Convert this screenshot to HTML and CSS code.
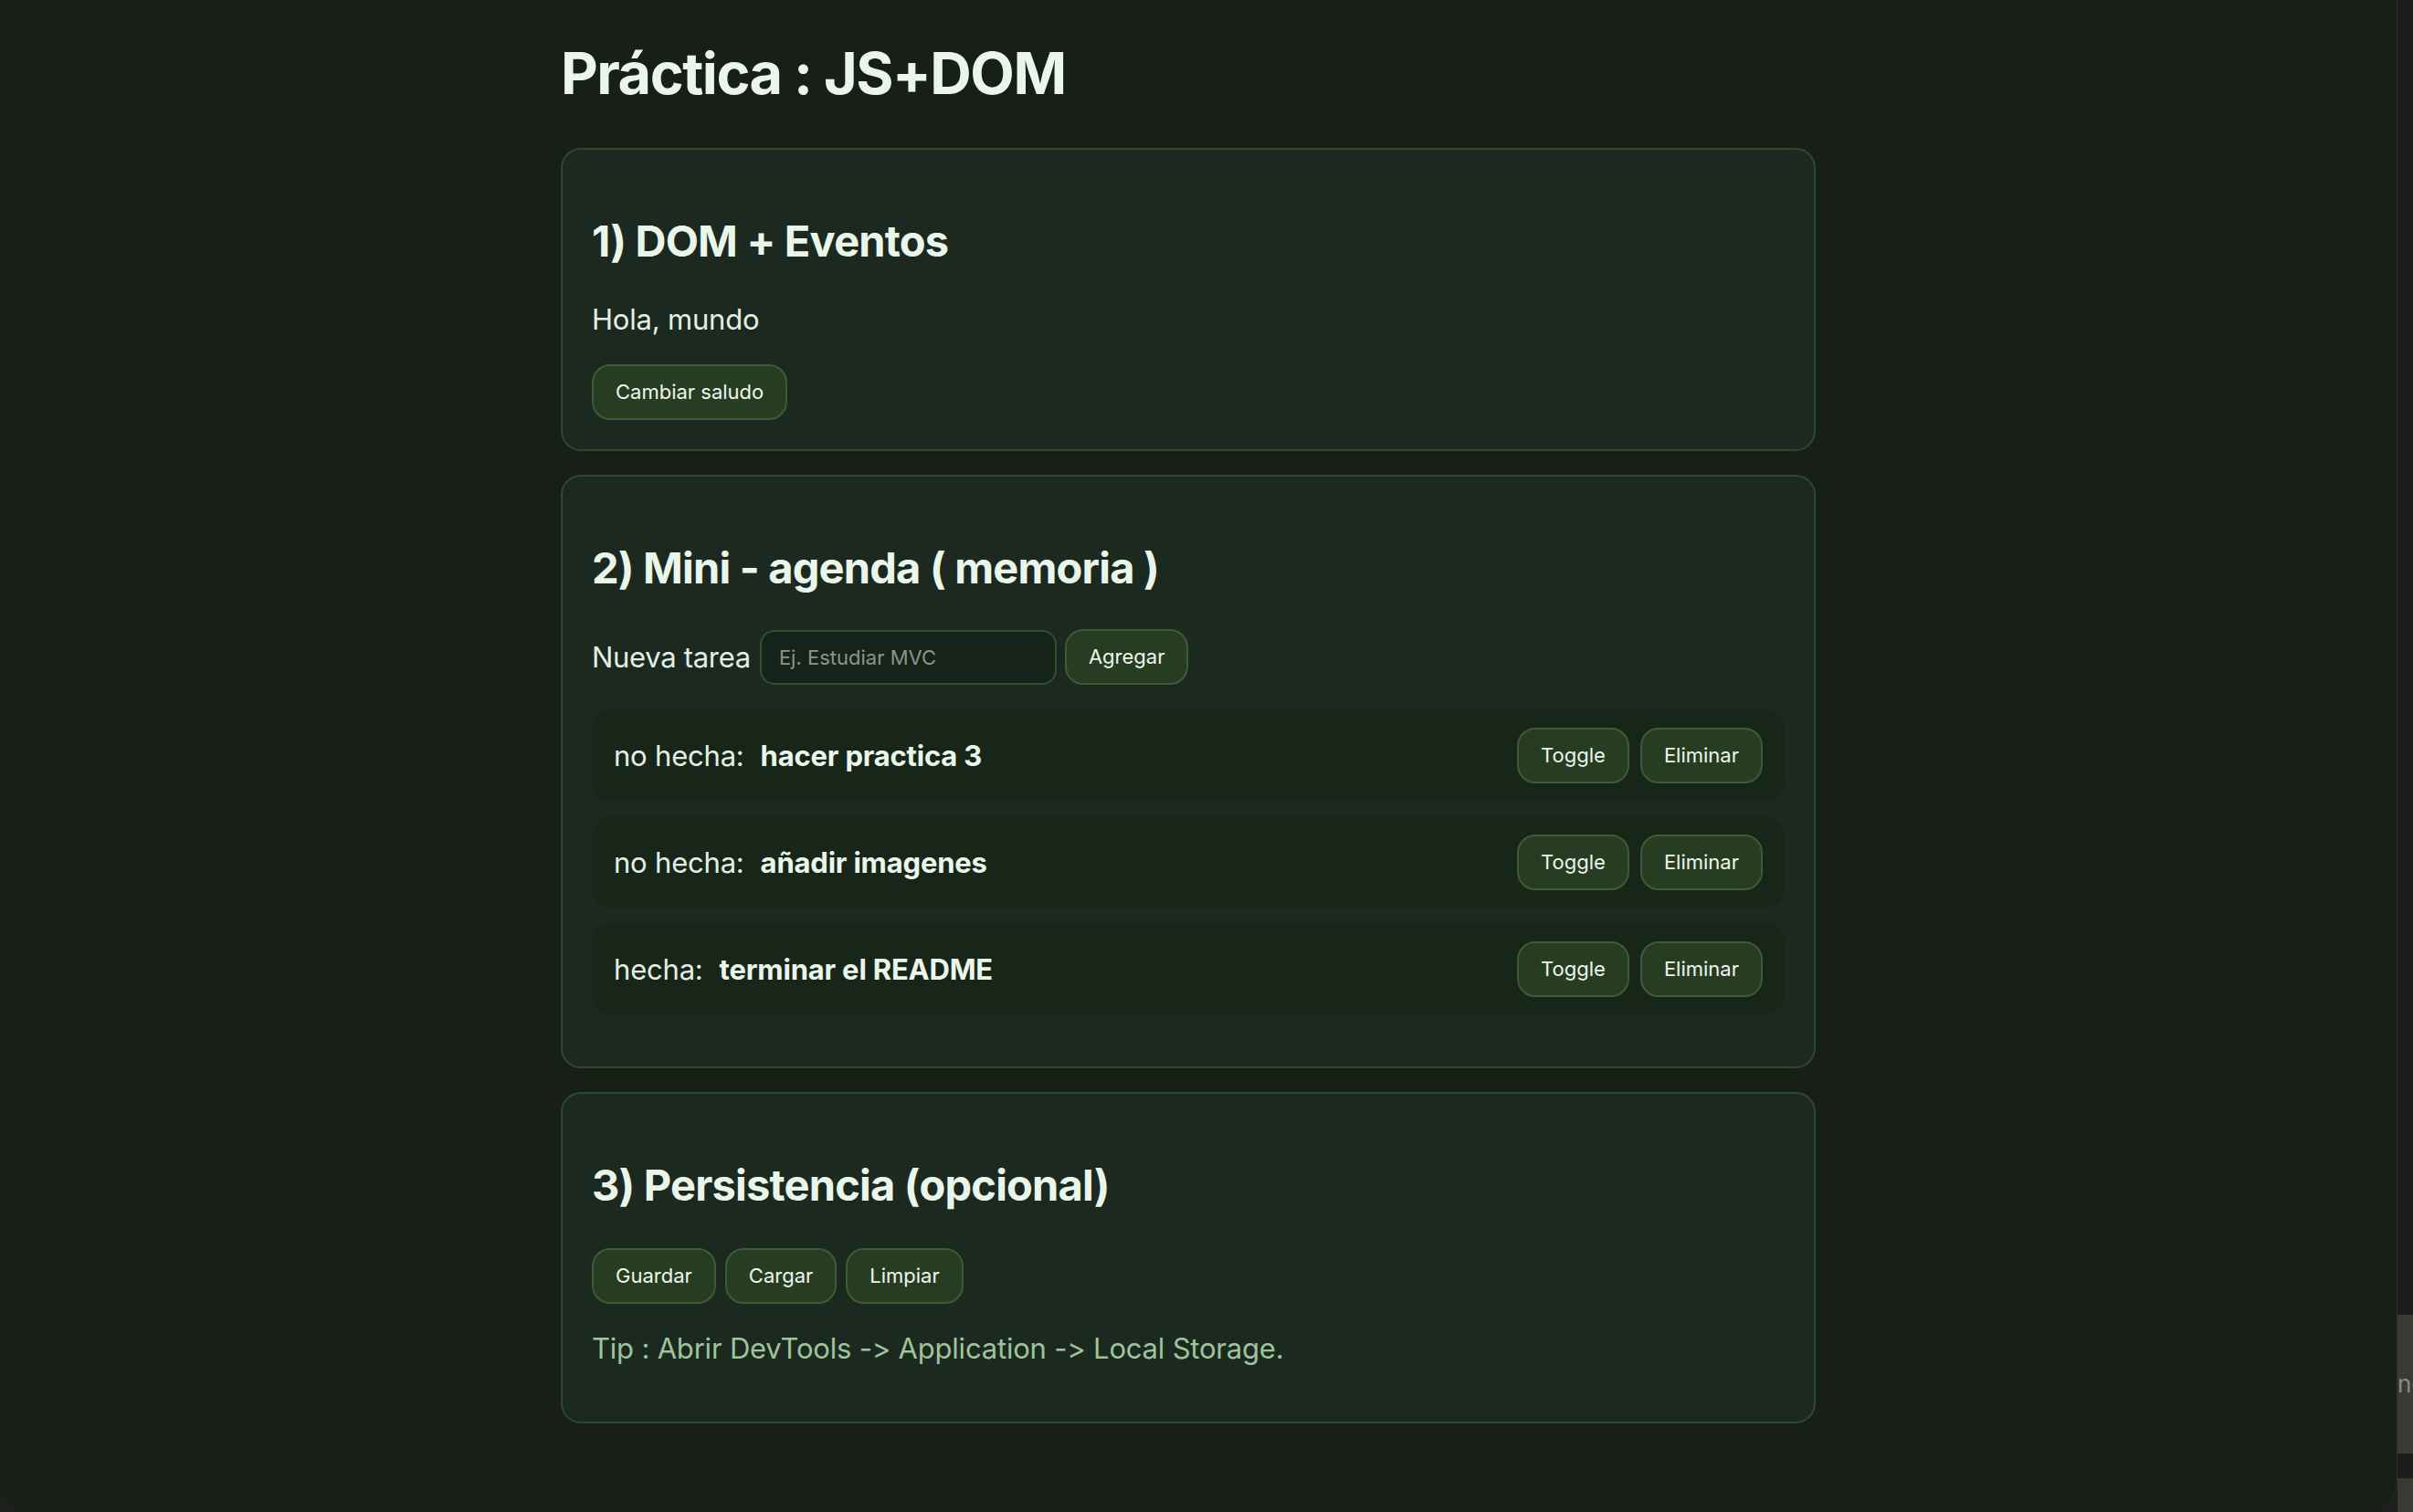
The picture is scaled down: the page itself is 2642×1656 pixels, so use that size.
FILE: index.html
```html
<!DOCTYPE html>
<html lang="es">
<head>
<meta charset="utf-8">
<title>Práctica : JS+DOM</title>
<link rel="stylesheet" href="styles.css">
</head>
<body>
<div class="window">
  <main class="page">
    <h1>Práctica : JS+DOM</h1>

    <section class="card">
      <h2>1) DOM + Eventos</h2>
      <p class="greeting">Hola, mundo</p>
      <button class="btn">Cambiar saludo</button>
    </section>

    <section class="card">
      <h2>2) Mini - agenda ( memoria )</h2>
      <div class="form-row">
        <label class="form-label" for="tarea">Nueva tarea</label>
        <input id="tarea" class="input" type="text" placeholder="Ej. Estudiar MVC">
        <button class="btn">Agregar</button>
      </div>
      <ul class="tasks">
        <li class="task">
          <span class="task-text"><span class="state">no hecha:</span><strong>hacer practica 3</strong></span>
          <span class="actions"><button class="btn">Toggle</button><button class="btn">Eliminar</button></span>
        </li>
        <li class="task">
          <span class="task-text"><span class="state">no hecha:</span><strong>añadir imagenes</strong></span>
          <span class="actions"><button class="btn">Toggle</button><button class="btn">Eliminar</button></span>
        </li>
        <li class="task">
          <span class="task-text"><span class="state">hecha:</span><strong>terminar el README</strong></span>
          <span class="actions"><button class="btn">Toggle</button><button class="btn">Eliminar</button></span>
        </li>
      </ul>
    </section>

    <section class="card">
      <h2>3) Persistencia (opcional)</h2>
      <div class="btn-row">
        <button class="btn">Guardar</button>
        <button class="btn">Cargar</button>
        <button class="btn">Limpiar</button>
      </div>
      <p class="tip">Tip : Abrir DevTools -&gt; Application -&gt; Local Storage.</p>
    </section>
  </main>
</div>
<aside class="side">
  <div class="side-dark"></div>
  <div class="side-panel"><span class="side-text">nc</span></div>
  <div class="side-gap"></div>
  <div class="side-bell"></div>
</aside>
</body>
</html>
```

FILE: styles.css
```css
* { box-sizing: border-box; }

html, body {
  margin: 0;
  height: 100%;
}

body {
  display: flex;
  background: #1e1e1e;
  font-family: Inter, "Liberation Sans", sans-serif;
  font-feature-settings: "calt" 0, "liga" 0;
  font-variant-ligatures: none;
  color: #e4efe3;
  overflow: hidden;
}

.window {
  width: 2625px;
  height: 1656px;
  flex: none;
  background: #171f17;
  border-right: 1px solid #243324;
  border-radius: 0 0 34px 34px;
  overflow: hidden;
}

.page {
  width: 1374px;
  margin-left: 614px;
  display: flex;
  flex-direction: column;
  gap: 26px;
}

h1 {
  margin: 42px 0 18px;
  font-size: 63px;
  line-height: 76px;
  font-weight: 700;
  color: #ebf6ea;
  letter-spacing: -1.5px;
}

.card {
  background: #1c2920;
  border: 2px solid #2f4a2b;
  border-radius: 22px;
  padding: 32px;
}

.card h2 {
  margin: 39px 0 40px;
  font-size: 47px;
  line-height: 58px;
  font-weight: 700;
  color: #ebf6ea;
  letter-spacing: -0.8px;
}

.greeting {
  margin: 0 0 33px;
  font-size: 31px;
  line-height: 33px;
  letter-spacing: -0.2px;
}

.btn {
  font-family: Inter, "Liberation Sans", sans-serif;
  font-size: 22px;
  line-height: 25px;
  padding: 16px 24px;
  color: #eef5ec;
  background: #273d22;
  border: 2px solid #3d5c33;
  border-radius: 20px;
  cursor: pointer;
}

.form-row {
  display: flex;
  align-items: center;
  height: 61px;
  margin-top: -2px;
}

.form-label {
  font-size: 31px;
  letter-spacing: -0.3px;
  margin-right: 10px;
}

.input {
  width: 325px;
  height: 60px;
  padding: 0 19px;
  background: #16231a;
  border: 2px solid #34502e;
  border-radius: 16px;
  color: #e4efe3;
  font-family: Inter, "Liberation Sans", sans-serif;
  font-size: 22px;
  margin-right: 9px;
}

.input::placeholder { color: #8b948a; }

.tasks {
  list-style: none;
  margin: 27px 0 24px;
  padding: 0;
  display: flex;
  flex-direction: column;
  gap: 16px;
}

.task {
  display: flex;
  align-items: center;
  justify-content: space-between;
  background: #18261a;
  border-radius: 22px;
  padding: 20px 24px;
}

.task-text {
  display: flex;
  gap: 18px;
  font-size: 31px;
  line-height: 39px;
  letter-spacing: -0.2px;
}

.task-text strong {
  font-weight: 700;
  color: #ebf6ea;
}

.actions {
  display: flex;
  gap: 12px;
}

.btn-row {
  display: flex;
  gap: 10px;
}

.tip {
  margin: 29px 0 29px;
  font-size: 31px;
  line-height: 39px;
  letter-spacing: -0.2px;
  color: #9fc39a;
}

.side {
  flex: 1;
  display: flex;
  flex-direction: column;
  height: 1656px;
}

.side-dark { height: 1440px; background: #1d1d1d; }

.side-panel {
  height: 152px;
  background: #3a3a35;
  overflow: hidden;
  padding-top: 60px;
}

.side-text {
  font-size: 26px;
  color: #8a8a84;
  white-space: nowrap;
}

.side-gap { height: 27px; background: #1d1d1d; }

.side-bell { flex: 1; background: #3a3a35; }
```
